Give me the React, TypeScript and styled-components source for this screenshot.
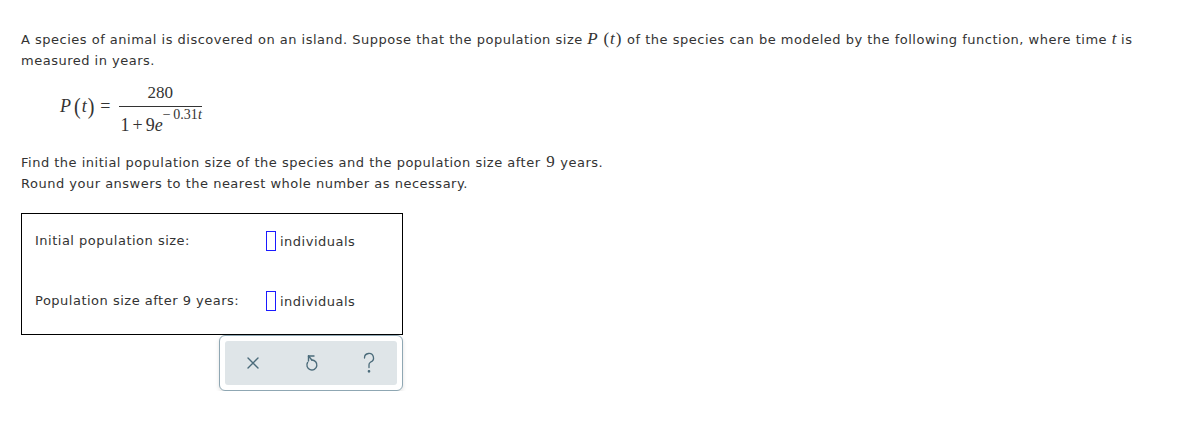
import styled, { createGlobalStyle } from 'styled-components';

const GlobalStyle = createGlobalStyle`
    body{
        margin: 0;
        background: #fff;
        font-family: "DejaVu Sans", Verdana, sans-serif;
        font-size: 13px;
        letter-spacing: 0.5px;
        color: #333;
    }
`;

const Page = styled.div`
    padding: 29px 21px 0 21px;
`;

const Para = styled.p`
    margin: 0;
    line-height: 21px;
    max-width: 1130px;
`;

const MathI = styled.span`
    font-family: "Liberation Serif", "Times New Roman", serif;
    font-style: italic;
    font-size: 17px;
    letter-spacing: 0;
    line-height: 0;
`;

const MathN = styled.span`
    font-family: "Liberation Serif", "Times New Roman", serif;
    font-size: 17px;
    letter-spacing: 0;
    line-height: 0;
    margin: 0 1px;
`;

const Formula = styled.div`
    display: flex;
    align-items: center;
    gap: 8px;
    margin: 13px 0 0 39px;
    font-family: "Liberation Serif", "Times New Roman", serif;
    font-size: 18px;
    letter-spacing: 0;
    color: #333;
`;

const Lhs = styled.div`
    display: flex;
    align-items: center;
    margin-top: -6px;
    .paren{
        display: inline-block;
        font-size: 20px;
        margin: 0 1px;
        transform: scaleY(1.15);
    }
    .first{
        margin-left: 3px;
    }
    .it{
        font-style: italic;
    }
    .eq{
        margin-left: 5px;
    }
`;

const Fraction = styled.div`
    display: inline-flex;
    flex-direction: column;
    align-items: stretch;
    .num{
        text-align: center;
        padding: 0 0 4px 0;
        line-height: 18px;
        font-size: 17px;
    }
    .den{
        display: flex;
        align-items: flex-start;
        border-top: 1px solid #333;
        padding: 1px 0 0 2px;
        line-height: 18px;
    }
    .base{
        padding-top: 8px;
    }
    .op{
        margin: 0 3px;
    }
    .exp{
        font-size: 14px;
        line-height: 14px;
    }
    .it{
        font-style: italic;
    }
`;

const Instructions = styled(Para)`
    margin-top: 18px;
`;

const AnswerBox = styled.div`
    box-sizing: border-box;
    margin-top: 19px;
    width: 382px;
    border: 1px solid #000;
    padding: 17px 0 23px 13px;
    display: grid;
    grid-template-columns: 231px auto;
    row-gap: 40px;
    align-items: center;
`;

const Label = styled.div`
    line-height: 20px;
`;

const Field = styled.div`
    display: flex;
    align-items: center;
    gap: 4px;
`;

const InputBox = styled.span`
    display: inline-block;
    width: 8px;
    height: 18px;
    border: 1px solid #1a1aff;
`;

const Toolbar = styled.div`
    margin-left: 198px;
    width: 172px;
    padding: 5px;
    border: 1px solid #8fa7b3;
    border-radius: 6px;
    box-shadow: 0 2px 4px rgba(0,0,0,0.12);
    background: #fff;
`;

const ToolInner = styled.div`
    display: flex;
    justify-content: space-between;
    align-items: center;
    height: 44px;
    padding: 0 16px 0 16px;
    background: #dfe5e8;
    border-radius: 3px;
`;

const ToolButton = styled.span`
    display: grid;
    place-content: center;
    width: 24px;
    height: 24px;
    color: #4b6b7a;
`;

export default function App() {
    return (
        <Page>
            <GlobalStyle />
            <Para>
                A species of animal is discovered on an island. Suppose that the population size <MathI>P</MathI> <MathN>(</MathN><MathI>t</MathI><MathN>)</MathN> of the species can be modeled by the following function, where time <MathI>t</MathI> is measured in years.
            </Para>
            <Formula>
                <Lhs>
                    <span className="it">P</span>
                    <span className="paren first">(</span>
                    <span className="it">t</span>
                    <span className="paren">)</span>
                    <span className="eq">=</span>
                </Lhs>
                <Fraction>
                    <div className="num">280</div>
                    <div className="den">
                        <span className="base">1<span className="op">+</span>9<span className="it">e</span></span>
                        <span className="exp">−&thinsp;0.31<span className="it">t</span></span>
                    </div>
                </Fraction>
            </Formula>
            <Instructions>
                Find the initial population size of the species and the population size after <MathN>9</MathN> years.<br />
                Round your answers to the nearest whole number as necessary.
            </Instructions>
            <AnswerBox>
                <Label>Initial population size:</Label>
                <Field><InputBox />individuals</Field>
                <Label>Population size after 9 years:</Label>
                <Field><InputBox />individuals</Field>
            </AnswerBox>
            <Toolbar>
                <ToolInner>
                    <ToolButton>
                        <svg width="14" height="14" viewBox="0 0 14 14" fill="none" stroke="currentColor" strokeWidth="1.4" strokeLinecap="round">
                            <path d="M2 2 L12 12 M12 2 L2 12" />
                        </svg>
                    </ToolButton>
                    <ToolButton>
                        <svg width="15" height="18" viewBox="0 0 15 18" fill="none" stroke="currentColor" strokeWidth="1.4" strokeLinecap="round" strokeLinejoin="round">
                            <path d="M4.5 2 L10 2" />
                            <path d="M4.5 2 L4.5 7" />
                            <path d="M4.5 2 L7.8 6" />
                            <path d="M7.8 6 A5 5 0 1 1 3.6 8.4" />
                        </svg>
                    </ToolButton>
                    <ToolButton>
                        <svg width="14" height="22" viewBox="0 0 14 22" fill="none" stroke="currentColor" strokeWidth="1.3" strokeLinecap="round">
                            <path d="M2.5 6 A4.5 4.5 0 1 1 8.5 10.2 Q7 11 7 12.8 L7 15.5" />
                            <circle cx="7" cy="19.3" r="0.7" fill="currentColor" />
                        </svg>
                    </ToolButton>
                </ToolInner>
            </Toolbar>
        </Page>
    );
}
